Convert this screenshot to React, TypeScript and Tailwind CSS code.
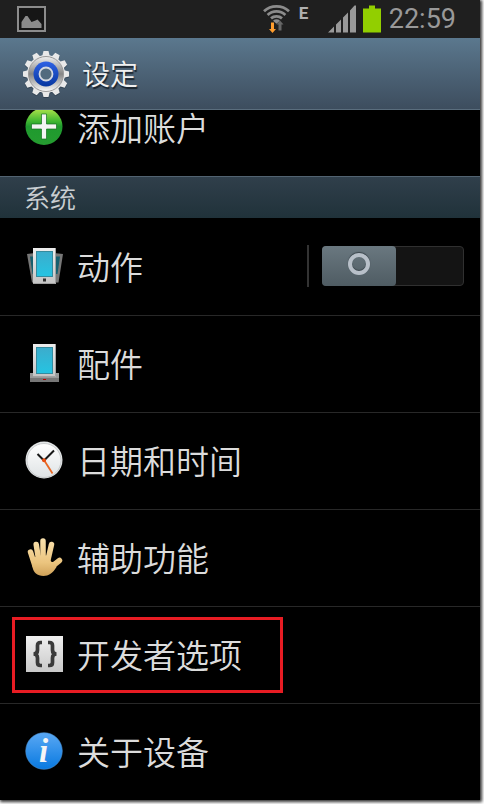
import { useState, type ReactNode } from "react";

function PictureIcon() {
  return (
    <svg className="h-[27px] w-[29px]" viewBox="0 0 29 27" aria-hidden="true">
      <rect x="1" y="1" width="27" height="24" fill="#161616" stroke="#8c8c8c" strokeWidth="2" />
      <path d="M4.500 22v-6l4-6h2l4 6 4-1.500 2-1 4 4.500v4z" fill="#8c8c8c" />
    </svg>
  );
}

function WifiIcon() {
  return (
    <svg className="h-7 w-[27px]" viewBox="0 0 27 28" aria-hidden="true">
      <g fill="none" stroke="#8c8c8c" strokeWidth="2.800">
        <path d="M1 6.200C8 -.2 19 -.2 26 6.200" />
        <path d="M4.600 9.900c5-4.700 12.800-4.700 17.800 0" />
        <path d="M8 13.400c3-2.700 8-2.700 11 0" />
      </g>
      <path d="M10 15.700c2-1.800 5-1.800 7 0l-3.500 3z" fill="#8c8c8c" />
      <path d="M13.500 19.500l3.500-4 3.500 4h-2v6h-3v-6z" fill="#666" />
      <path d="M8 17.500h3V24h2l-3.500 4L6 24h2z" fill="#ff9d2e" />
    </svg>
  );
}

function SignalIcon() {
  return (
    <svg className="h-7 w-7" viewBox="0 0 28 28" aria-hidden="true">
      <path d="M0 27.500L6 21.500V27.500zM8 27.500V19.500L13 14.500V27.500zM15 27.500V12.500L20 7.500V27.500zM22 27.500V5.500L26.500 .5H28V27.500z" fill="#999" />
    </svg>
  );
}

function BatteryIcon() {
  return (
    <svg className="h-7 w-[18px]" viewBox="0 0 18 28" aria-hidden="true">
      <path d="M6 .5h6v3h6V27.500H0V3.500h6z" fill="#92cf00" />
    </svg>
  );
}

const TEETH = [0, 30, 60, 90, 120, 150, 180, 210, 240, 270, 300, 330];

function GearIcon() {
  return (
    <svg className="h-12 w-12" viewBox="0 0 48 48" aria-hidden="true">
      <defs>
        <linearGradient id="gearRim" x2="0" y2="1">
          <stop offset="0" stopColor="#f0f0f0" />
          <stop offset=".5" stopColor="#858585" />
          <stop offset="1" stopColor="#fafafa" />
        </linearGradient>
        <linearGradient id="gearBlue" x2="0" y2="1">
          <stop offset="0" stopColor="#2f62e4" />
          <stop offset="1" stopColor="#0737a0" />
        </linearGradient>
      </defs>
      <g fill="#263442" opacity=".6" transform="translate(0 1)">
        {TEETH.map((a) => (
          <path key={a} d="M20 7L21.500 1h5L28 7z" transform={`rotate(${a} 24 24)`} />
        ))}
        <circle cx="24" cy="24" r="19" />
      </g>
      <g fill="#e9e9e9">
        {TEETH.map((a) => (
          <path key={a} d="M20 7L21.500 1h5L28 7z" transform={`rotate(${a} 24 24)`} />
        ))}
        <circle cx="24" cy="24" r="19" />
      </g>
      <circle cx="24" cy="24" r="17.500" fill="url(#gearRim)" stroke="#999" />
      <circle cx="24" cy="24" r="12.500" fill="url(#gearBlue)" />
      <circle cx="24" cy="24" r="6.500" fill="#526a7e" stroke="#d5d9e0" strokeWidth="1.800" />
    </svg>
  );
}

function AddIcon() {
  return (
    <svg className="size-[38px]" viewBox="0 0 38 38" aria-hidden="true">
      <defs>
        <linearGradient id="addFill" x2="0" y2="1">
          <stop offset="0" stopColor="#b4e64c" />
          <stop offset=".35" stopColor="#42b832" />
          <stop offset=".5" stopColor="#1f9a2e" />
          <stop offset="1" stopColor="#259c30" />
        </linearGradient>
      </defs>
      <circle cx="19" cy="18.500" r="18.500" fill="url(#addFill)" />
      <path d="M16.500 6h5v10h10v5h-10v10h-5v-10h-10v-5h10z" fill="#f4f4f4" stroke="#14701f" strokeWidth=".7" />
    </svg>
  );
}

function PhoneGradients() {
  return (
    <defs>
      <linearGradient id="phoneBody" x2="0" y2="1">
        <stop offset="0" stopColor="#ededed" />
        <stop offset="1" stopColor="#c4c4c4" />
      </linearGradient>
      <linearGradient id="phoneScreen" x2="0" y2="1">
        <stop offset="0" stopColor="#3caccc" />
        <stop offset="1" stopColor="#25c4e2" />
      </linearGradient>
    </defs>
  );
}

function MotionIcon() {
  return (
    <svg className="size-[38px]" viewBox="0 0 38 38" aria-hidden="true">
      <PhoneGradients />
      <path d="M2 7L10 6V35.500H7z" fill="#777" />
      <path d="M5 9.500H9V27H7.500z" fill="#165f6e" />
      <path d="M38 7L29 6V35.500H33.500z" fill="#777" />
      <path d="M35 9.500H30V27H32.500z" fill="#165f6e" />
      <path d="M8 1H31V37H8z" fill="url(#phoneBody)" />
      <path d="M30.500 1v35.500H8" fill="none" stroke="#a2a2a2" />
      <rect x="11.500" y="4.500" width="16" height="25" fill="url(#phoneScreen)" stroke="#358b9e" />
      <rect x="18" y="31.500" width="3" height="3" fill="#303030" />
    </svg>
  );
}

function DockIcon() {
  return (
    <svg className="size-[38px]" viewBox="0 0 38 38" aria-hidden="true">
      <PhoneGradients />
      <path d="M5 29H34V38H5z" fill="#999" />
      <path d="M5 34H34V38H5z" fill="#777" />
      <path d="M8 0H31V33H8z" fill="url(#phoneBody)" />
      <path d="M30.500 0v32.500H8" fill="none" stroke="#a2a2a2" />
      <rect x="11.500" y="3.500" width="16" height="26" fill="url(#phoneScreen)" stroke="#358b9e" />
      <path d="M18 35h3v1h-3z" fill="#b00" />
    </svg>
  );
}

function ClockIcon() {
  return (
    <svg className="size-[38px]" viewBox="0 0 38 38" aria-hidden="true">
      <defs>
        <linearGradient id="clockFace" x2="0" y2="1">
          <stop offset="0" stopColor="#fff" />
          <stop offset="1" stopColor="#dfe3e5" />
        </linearGradient>
      </defs>
      <circle cx="19" cy="19" r="18.500" fill="#e4e7e8" />
      <circle cx="19" cy="19.500" r="17" fill="url(#clockFace)" stroke="#b9bcbd" strokeWidth=".7" />
      <path d="M12.500 13L19 19.500L29 9.500" fill="none" stroke="#181818" strokeWidth="2" />
      <path d="M19 19L27.500 32.500" stroke="#e86724" strokeWidth="1.800" />
      <circle cx="19" cy="19.200" r="2" fill="#e84f12" />
    </svg>
  );
}

function HandIcon() {
  return (
    <svg className="size-[38px]" viewBox="0 0 38 38" aria-hidden="true">
      <defs>
        <linearGradient id="handFill" gradientUnits="userSpaceOnUse" x1="0" y1="0" x2="0" y2="38">
          <stop offset="0" stopColor="#fae2ae" />
          <stop offset=".65" stopColor="#ebc47e" />
          <stop offset="1" stopColor="#cfa158" />
        </linearGradient>
      </defs>
      <g fill="none" stroke="url(#handFill)" strokeWidth="5.500" strokeLinecap="round">
        <path d="M5.500 14L10 28" />
        <path d="M11.200 6.500L14 24" />
        <path d="M18 3L18.100 24" />
        <path d="M26.500 6.500L22.500 24" />
        <path d="M34.500 22.500L25 30" />
      </g>
      <path d="M7 22L12 17.500H24.800C24.500 22 26 25.500 29.500 23.500L31.500 29C28 35 23.500 38 18.500 38C12 38 8.500 34.500 7.500 29z" fill="url(#handFill)" />
    </svg>
  );
}

function BracesIcon() {
  return (
    <svg className="size-[38px]" viewBox="0 0 38 38" aria-hidden="true">
      <defs>
        <linearGradient id="bracesFill" x2="0" y2="1">
          <stop offset="0" stopColor="#f0f0f0" />
          <stop offset="1" stopColor="#c9c9c9" />
        </linearGradient>
      </defs>
      <rect x="1" y="1" width="37" height="36" fill="url(#bracesFill)" />
      <g fill="none" stroke="#3a3a3a" strokeWidth="3.700">
        <path d="M17 7.500H15.500Q12.500 7.500 12.500 10.500V15Q12.500 19 8.500 19Q12.500 19 12.500 23V27.500Q12.500 30.500 15.500 30.500H17" />
        <path d="M23 7.500H24.500Q27.500 7.500 27.500 10.500V15Q27.500 19 31.500 19Q27.500 19 27.500 23V27.500Q27.500 30.500 24.500 30.500H23" />
      </g>
    </svg>
  );
}

function InfoIcon() {
  return (
    <svg className="size-[38px]" viewBox="0 0 38 38" aria-hidden="true">
      <defs>
        <linearGradient id="infoFill" x2="0" y2="1">
          <stop offset="0" stopColor="#5aa8f4" />
          <stop offset="1" stopColor="#0879e0" />
        </linearGradient>
      </defs>
      <circle cx="19" cy="19" r="18.300" fill="url(#infoFill)" stroke="#4c8fcf" strokeWidth=".6" />
      <text x="18.500" y="30" textAnchor="middle" fill="#f5f5f5" className="font-['Liberation_Serif',serif] text-[33px] font-bold italic">
        i
      </text>
    </svg>
  );
}

function Entry({ icon, label }: { icon: ReactNode; label: string }) {
  return (
    <a href="#" className="flex h-24 flex-1 items-center gap-[14px] pb-[2px] pl-[25px]">
      {icon}
      <span className="text-[33px] leading-8 text-[#dcdcdc]">{label}</span>
    </a>
  );
}

function MotionSwitch() {
  const [on, setOn] = useState(false);
  return (
    <button
      type="button"
      role="switch"
      aria-checked={on}
      aria-label="动作"
      onClick={() => setOn(!on)}
      className={`flex h-10 w-[142px] rounded-[4px] border border-[#303030] bg-[#141414] ${on ? "justify-end" : "justify-start"}`}
    >
      <span className="-m-px flex h-10 w-[74px] items-center justify-center rounded-[4px] bg-linear-to-b from-[#6a7880] to-[#4f5c63]">
        <span className="mb-1 size-[22px] rounded-full border-4 border-[#b8c0c9] shadow-[0_-1px_1px_#3b464d,inset_0_-1px_1px_#3b464d]" />
      </span>
    </button>
  );
}

export default function App() {
  return (
    <div className="bg-white pr-1 pb-1">
      <div className="bg-black font-['Noto_Sans_CJK_SC',sans-serif] font-[350] shadow-[1px_1px_3px_1px_#333]">
        <div className="flex h-[38px] items-center bg-[#1f1f1f] pr-6 pl-[17px]">
          <PictureIcon />
          <div className="ml-auto flex items-center">
            <WifiIcon />
            <span className="mb-3 ml-[9px] w-[29px] font-[Roboto,sans-serif] text-[17px] leading-5 font-bold text-[#b0b0b0]">E</span>
            <SignalIcon />
            <span className="ml-[7px] flex">
              <BatteryIcon />
            </span>
            <time className="ml-2 font-[Roboto,sans-serif] text-[27px] leading-8 font-normal text-[#999]">22:59</time>
          </div>
        </div>

        <header className="flex h-[72px] items-center gap-3 border-b border-[#5a6d7d] bg-linear-to-b from-[#5b788e] to-[#3d4d5e] pl-[22px]">
          <GearIcon />
          <h1 className="pb-[2px] text-[28px] leading-9 text-[#f0f0f0] [text-shadow:1px_2px_1px_#1b242d]">设定</h1>
        </header>

        <main>
          <div className="flex h-[66px] items-end overflow-hidden">
            <Entry icon={<AddIcon />} label="添加账户" />
          </div>

          <h2 className="h-[42px] border-t border-[#526371] bg-linear-to-b from-[#303f4b] to-[#20323a] pl-6 text-[26px] leading-10 text-[#c9ced2]">
            系统
          </h2>

          <ul>
            <li className="flex h-[97px] items-end pr-4">
              <Entry icon={<MotionIcon />} label="动作" />
              <div className="flex h-24 items-center gap-[13px] pb-[2px]">
                <span className="h-[42px] w-[2px] bg-[#333]" />
                <MotionSwitch />
              </div>
            </li>
            <li className="flex h-[97px] border-t border-[#282828]">
              <Entry icon={<DockIcon />} label="配件" />
            </li>
            <li className="flex h-[97px] border-t border-[#282828]">
              <Entry icon={<ClockIcon />} label="日期和时间" />
            </li>
            <li className="flex h-[97px] border-t border-[#282828]">
              <Entry icon={<HandIcon />} label="辅助功能" />
            </li>
            <li className="relative flex h-[97px] border-t border-[#282828]">
              <Entry icon={<BracesIcon />} label="开发者选项" />
              <span className="pointer-events-none absolute top-[10px] left-3 h-[76px] w-[271px] border-3 border-[#e81c23]" />
            </li>
            <li className="flex h-[97px] border-t border-[#282828]">
              <Entry icon={<InfoIcon />} label="关于设备" />
            </li>
          </ul>
        </main>
      </div>
    </div>
  );
}
